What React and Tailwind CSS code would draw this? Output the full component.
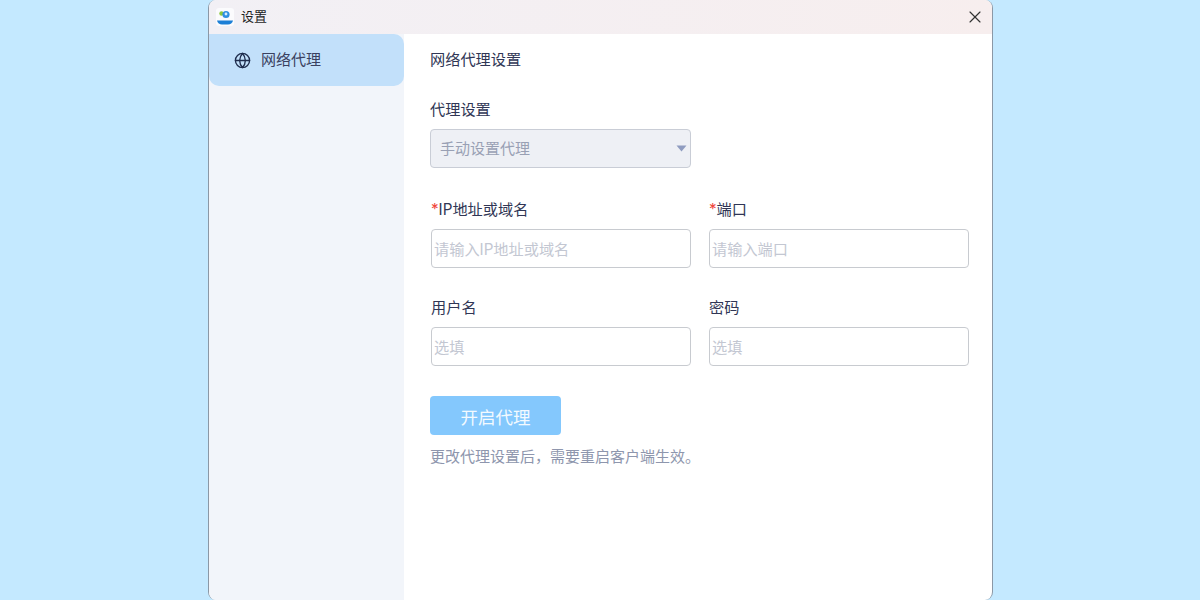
import React from 'react';
import { X, Globe } from 'lucide-react';

const Field = ({ label, placeholder, required }) => (
    <div className="w-[260px]">
        <div className="h-[20px] leading-[20px] text-[15.200px] text-[#303655]">
            {required && <span className="text-[#f0483e]">*</span>}
            {label}
        </div>
        <div className="mt-[9px] h-[39px] rounded-[4px] border border-[#c8cbd0] bg-white pl-[2px] leading-[40px] text-[15.200px] text-[#c3c7d2]">
            {placeholder}
        </div>
    </div>
);

const AppLogo = () => (
    <svg width="18" height="18" viewBox="0 0 18 18">
        <rect width="18" height="18" rx="3" fill="#fbfbfd" />
        <circle cx="5.500" cy="5.500" r="2.200" fill="#8cc63f" />
        <circle cx="10" cy="6.500" r="3.600" fill="#2f8fe0" />
        <circle cx="10" cy="6" r="1.400" fill="#d7ecfb" />
        <path d="M1 12.500h16c-.6 2.400-2.500 4-5 4H6c-2.500 0-4.400-1.600-5-4z" fill="#1c7fd6" />
    </svg>
);

export default function App() {
    return (
        <div className="flex h-[600px] justify-center overflow-hidden bg-[#c4e9ff] pl-[1px] font-['Inter','Noto_Sans_CJK_SC',sans-serif]">
            <div className="flex h-[600px] w-[785px] flex-col overflow-hidden rounded-[8px] border-x border-[#8b98a6] bg-white">
                {/* Title bar */}
                <div className="flex h-[34px] shrink-0 items-center justify-between bg-gradient-to-r from-[#f2f0f5] to-[#f7eeee] pl-[7px] pr-[7px]">
                    <div className="flex items-center gap-[7px]">
                        <AppLogo />
                        <span className="text-[13px] text-[#1d1d1f]">设置</span>
                    </div>
                    <X size={20} strokeWidth={1.400} className="text-[#333]" />
                </div>

                <div className="flex min-h-0 flex-1">
                    {/* Sidebar */}
                    <div className="w-[195px] shrink-0 bg-[#f2f5fa]">
                        <div className="flex h-[52px] items-center gap-[10px] rounded-[10px] rounded-tl-none bg-[#c2e0fa] pl-[25px]">
                            <Globe size={17} strokeWidth={1.900} className="text-[#1f2d4d]" />
                            <span className="pt-[1px] text-[15px] text-[#3a4160]">网络代理</span>
                        </div>
                    </div>

                    {/* Main */}
                    <div className="flex-1 pl-[26px] pt-[16px]">
                        <div className="h-[20px] leading-[20px] text-[15.200px] text-[#303655]">网络代理设置</div>

                        <div className="mt-[30px] h-[20px] leading-[20px] text-[15.200px] text-[#303655]">代理设置</div>
                        <div className="mt-[9px] flex h-[39px] w-[261px] items-center justify-between rounded-[4px] border border-[#c9cdd6] bg-[#eef0f5] pl-[9px] pr-[2px] text-[15px] text-[#99a0b4]">
                            <span className="pt-[2px]">手动设置代理</span>
                            <svg width="11" height="7" viewBox="0 0 11 7" className="mr-[1px]">
                                <path d="M0.500 0.500h10L5.500 6.500z" fill="#8f9cc0" />
                            </svg>
                        </div>

                        <div className="ml-[1px] mt-[32px] flex gap-[18px]">
                            <Field required label="IP地址或域名" placeholder="请输入IP地址或域名" />
                            <Field required label="端口" placeholder="请输入端口" />
                        </div>

                        <div className="ml-[1px] mt-[30px] flex gap-[18px]">
                            <Field label="用户名" placeholder="选填" />
                            <Field label="密码" placeholder="选填" />
                        </div>

                        <div className="mt-[30px] flex h-[39px] w-[131px] items-center justify-center rounded-[4px] bg-[#84c8fd] pt-[5px] text-[17.500px] text-[#f3faff]">
                            开启代理
                        </div>
                        <div className="mt-[12px] h-[20px] leading-[20px] text-[15px] text-[#8e96ad]">
                            {'更改代理设置后\uFF0C需要重启客户端生效\u3002'}
                        </div>
                    </div>
                </div>
            </div>
        </div>
    );
}
